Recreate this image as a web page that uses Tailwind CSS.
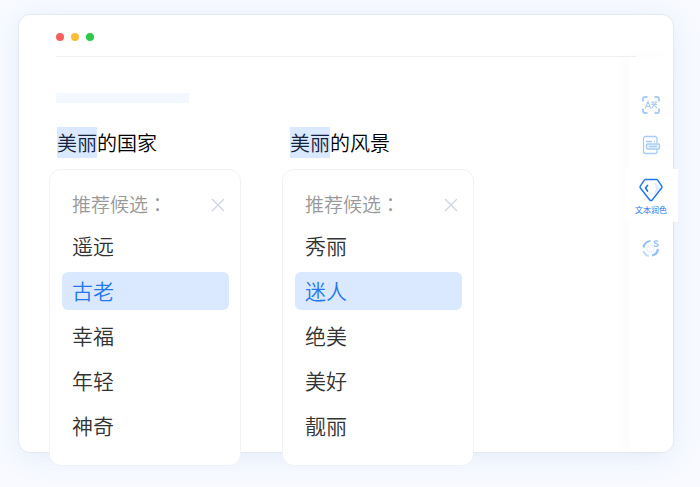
<!DOCTYPE html>
<html lang="zh-CN">

<head>
  <meta charset="UTF-8">
  <meta name="viewport" content="width=device-width, initial-scale=1.0">
  <title>文本润色</title>
  <script src="https://cdn.jsdelivr.net/npm/@tailwindcss/browser@4"></script>
  <style>
    body {
      font-family: "Noto Sans CJK SC", "Noto Sans", sans-serif;
    }
  </style>
</head>

<body class="min-h-screen bg-[#f8faff] pt-[14px] pr-[26px] pb-[34px] pl-[18px]">
  <!-- Editor window -->
  <div class="flex flex-col rounded-xl border border-[#e4e9f1] bg-white shadow-[0_4px_28px_rgba(80,140,220,0.12)]">
    <header class="mx-[37px] flex h-[42px] items-center gap-[7px] border-b border-[#eeeff1] pt-[2px]">
      <span class="size-2 rounded-full bg-[#f7605a]"></span>
      <span class="size-2 rounded-full bg-[#fcbd36]"></span>
      <span class="size-2 rounded-full bg-[#2fc84a]"></span>
    </header>

    <div class="flex">
      <main class="flex-1 pt-9 pl-[30px]">
        <div class="ml-[7px] h-[10px] w-[133px] bg-[#f3f7ff]"></div>

        <div class="-mb-[14px] flex gap-[41px] pt-6">
          <section class="w-[192px]">
            <p class="pl-2 text-[20px] leading-[31px] font-[350] text-black"><mark class="inline-block bg-[#dae9ff] text-[#14233c]">美丽</mark>的国家</p>
            <div class="relative mt-[11px] rounded-xl border border-[#f1f2f4] bg-white pt-[19px] pr-[11px] pb-5 pl-3">
              <div class="flex h-[31px] items-center justify-between pr-1 pl-[10px]">
                <h2 class="text-[19px] font-[350] text-[#999]">推荐候选<span lang="zh-TW" class="font-['Noto_Sans_CJK_TC']">：</span></h2>
                <button type="button" aria-label="关闭">
                  <svg class="size-[14px]" viewBox="0 0 14 14" fill="none" stroke="#d0d5e4" stroke-width="1.3"><path d="M1 1l12 12M13 1L1 13" /></svg>
                </button>
              </div>
              <div class="mt-[7px] flex flex-col gap-[7px] text-[21px] font-[350] text-[#333]">
                <button type="button" class="h-[38px] rounded-md px-[10px] text-left">遥远</button>
                <button type="button" class="h-[38px] rounded-md bg-[#dae9ff] px-[10px] text-left text-[#2478ec]">古老</button>
                <button type="button" class="h-[38px] rounded-md px-[10px] text-left">幸福</button>
                <button type="button" class="h-[38px] rounded-md px-[10px] text-left">年轻</button>
                <button type="button" class="h-[38px] rounded-md px-[10px] text-left">神奇</button>
              </div>
            </div>
          </section>

          <section class="w-[192px]">
            <p class="pl-2 text-[20px] leading-[31px] font-[350] text-black"><mark class="inline-block bg-[#dae9ff] text-[#14233c]">美丽</mark>的风景</p>
            <div class="relative mt-[11px] rounded-xl border border-[#f1f2f4] bg-white pt-[19px] pr-[11px] pb-5 pl-3">
              <div class="flex h-[31px] items-center justify-between pr-1 pl-[10px]">
                <h2 class="text-[19px] font-[350] text-[#999]">推荐候选<span lang="zh-TW" class="font-['Noto_Sans_CJK_TC']">：</span></h2>
                <button type="button" aria-label="关闭">
                  <svg class="size-[14px]" viewBox="0 0 14 14" fill="none" stroke="#d0d5e4" stroke-width="1.3"><path d="M1 1l12 12M13 1L1 13" /></svg>
                </button>
              </div>
              <div class="mt-[7px] flex flex-col gap-[7px] text-[21px] font-[350] text-[#333]">
                <button type="button" class="h-[38px] rounded-md px-[10px] text-left">秀丽</button>
                <button type="button" class="h-[38px] rounded-md bg-[#dae9ff] px-[10px] text-left text-[#2478ec]">迷人</button>
                <button type="button" class="h-[38px] rounded-md px-[10px] text-left">绝美</button>
                <button type="button" class="h-[38px] rounded-md px-[10px] text-left">美好</button>
                <button type="button" class="h-[38px] rounded-md px-[10px] text-left">靓丽</button>
              </div>
            </div>
          </section>
        </div>
      </main>

      <!-- Toolbar -->
      <aside class="flex w-[44px] flex-col items-center rounded-br-xl bg-white pt-[37px] shadow-[-6px_0_16px_rgba(0,0,0,0.02)]">
        <button type="button" aria-label="识别翻译">
          <svg class="size-[22px]" viewBox="0 0 22 22" fill="none" stroke="#a9cbf9" stroke-width="1.9">
            <path d="M3 7.500V5a2 2 0 0 1 2-2h2.500M14.500 3H17a2 2 0 0 1 2 2v2.500M19 14.500V17a2 2 0 0 1-2 2h-2.500M7.500 19H5a2 2 0 0 1-2-2v-2.500" />
            <path d="M5.200 14.500L8 7.500l2.800 7M6.500 12.500h3M11.300 8h6M11.500 10.500h5.500M12 8l5.300 6.500M16.500 8l-5 6.500" stroke-width="1.1" />
          </svg>
        </button>
        <button type="button" class="mt-[18px]" aria-label="文档">
          <svg class="size-[22px]" viewBox="0 0 22 22" fill="none" stroke="#a9cbf9" stroke-width="1.300">
            <path d="M17 9V4.500a2 2 0 0 0-2-2H5.500a2 2 0 0 0-2 2v13a2 2 0 0 0 2 2H15a2 2 0 0 0 2-2V15" />
            <path d="M6 7.500h6M14 7.500h1" />
            <rect x="6.500" y="10" width="13" height="5" rx="1" fill="#e6f0ff" />
            <path d="M9 12.500h8" />
          </svg>
        </button>
        <button type="button" class="mt-[13px] flex h-[53px] w-[53px] flex-col items-center bg-white pt-2">
          <svg class="size-[26px]" viewBox="0 0 26 26" fill="none" stroke-linejoin="round" stroke-linecap="round">
            <path d="M16 6h2.500l3.500 5.500-6 6.500 2-6.500z" fill="#dfecff" />
            <path d="M7.500 2.500h11a1.500 1.500 0 0 1 1.200.6l4 6.100a1.500 1.500 0 0 1-.1 1.800L14.200 23a1.500 1.500 0 0 1-2.400 0L2.400 11a1.500 1.500 0 0 1-.1-1.800l4-6.100a1.500 1.500 0 0 1 1.200-.6z" stroke="#2478ec" stroke-width="1.500" />
            <path d="M9.500 8.500L7.500 11l2 3" stroke="#2478ec" stroke-width="1.700" />
          </svg>
          <span class="text-[8px] leading-[14px] whitespace-nowrap text-[#2478ec]">文本润色</span>
        </button>
        <button type="button" class="mt-[15px]" aria-label="改写">
          <svg class="size-[22px]" viewBox="0 0 22 22" fill="none">
            <circle cx="10.500" cy="11.500" r="3.500" stroke="#eaf3ff" stroke-width="1.500" />
            <path d="M3.500 10.500A7.500 7.500 0 0 1 10.500 4M18 12a7.500 7.500 0 0 1-6 6.500" stroke="#93bff8" stroke-width="2.200" />
            <path d="M3.500 14a7.500 7.500 0 0 0 5.500 5" stroke="#c4dcfc" stroke-width="2.200" />
            <path d="M18 4.700c-.7-1.200-3.800-1.200-3.800.6 0 1.800 4 .8 4 2.700 0 1.700-3.300 1.700-4.200.4" stroke="#93bff8" stroke-width="1.400" />
          </svg>
        </button>
      </aside>
    </div>
  </div>
</body>

</html>
